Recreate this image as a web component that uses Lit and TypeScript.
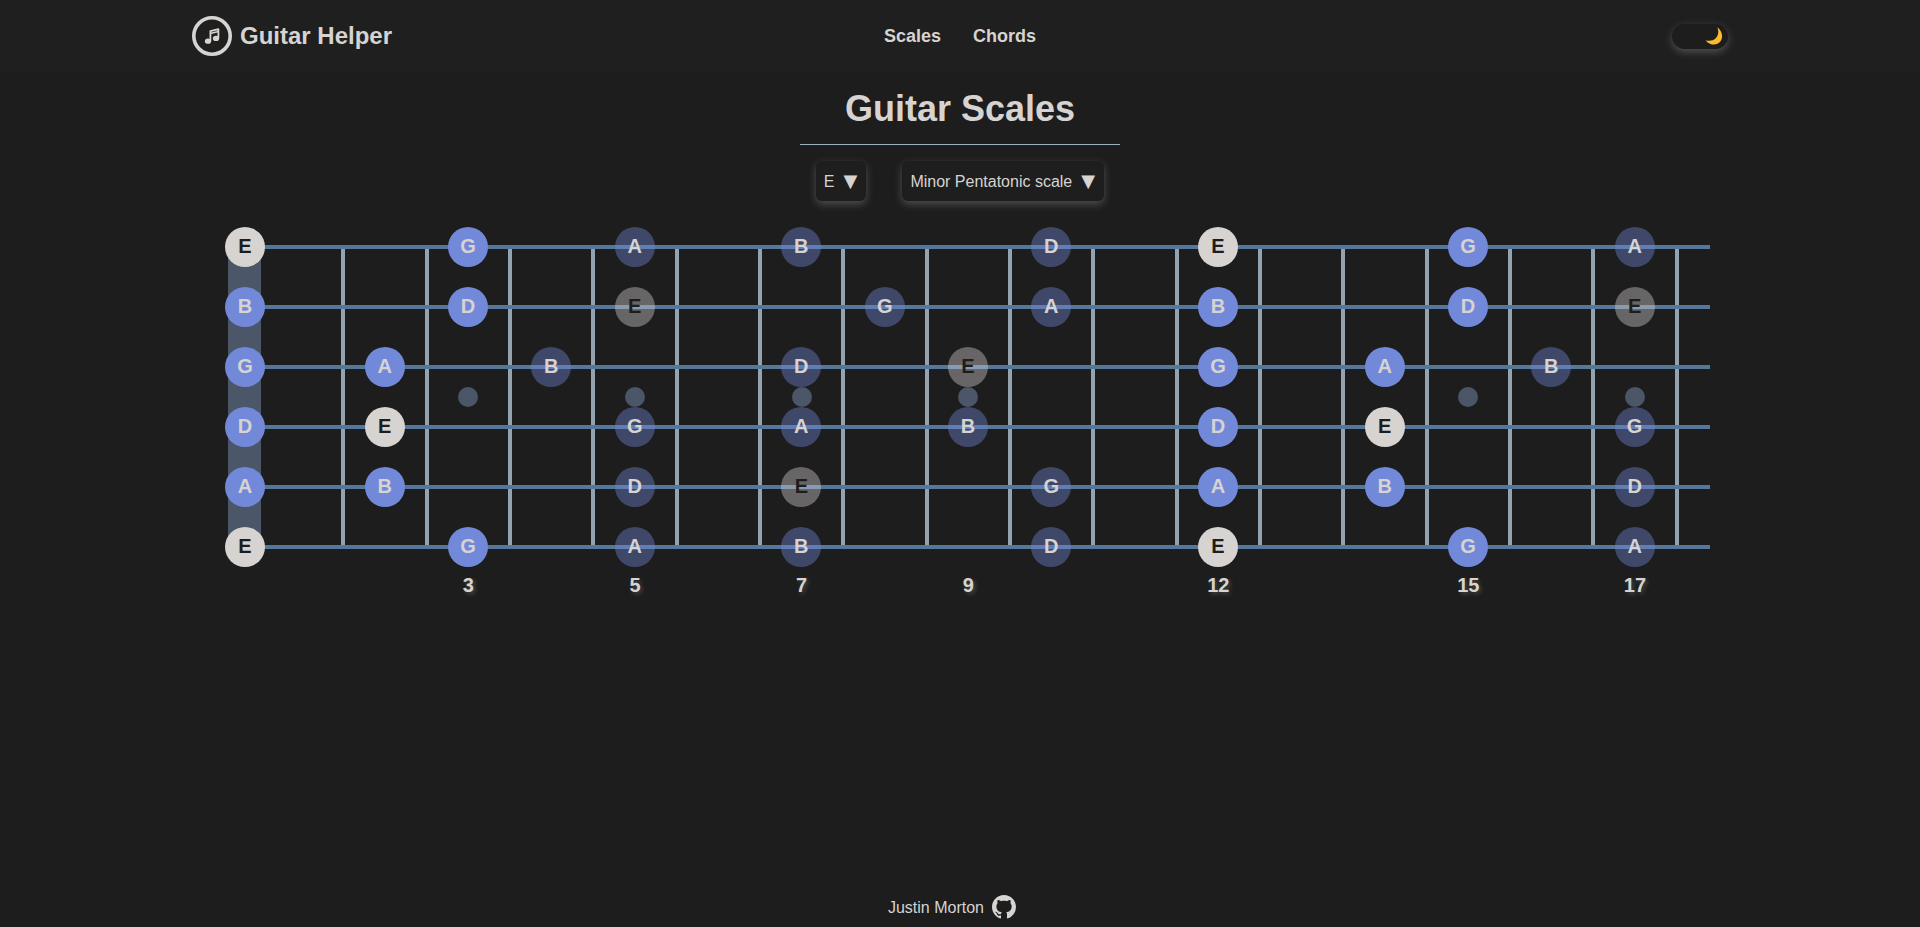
import { LitElement, html, css } from "lit";
import { customElement } from "lit/decorators.js";

type Kind = "b" | "d" | "w" | "x";
// [fret, note, kind] per string; b = scale note, d = dimmed, w = root, x = dimmed root
const STRINGS: [number, string, Kind][][] = [
  [[0,"E","w"],[3,"G","b"],[5,"A","d"],[7,"B","d"],[10,"D","d"],[12,"E","w"],[15,"G","b"],[17,"A","d"]],
  [[0,"B","b"],[3,"D","b"],[5,"E","x"],[8,"G","d"],[10,"A","d"],[12,"B","b"],[15,"D","b"],[17,"E","x"]],
  [[0,"G","b"],[2,"A","b"],[4,"B","d"],[7,"D","d"],[9,"E","x"],[12,"G","b"],[14,"A","b"],[16,"B","d"]],
  [[0,"D","b"],[2,"E","w"],[5,"G","d"],[7,"A","d"],[9,"B","d"],[12,"D","b"],[14,"E","w"],[17,"G","d"]],
  [[0,"A","b"],[2,"B","b"],[5,"D","d"],[7,"E","x"],[10,"G","d"],[12,"A","b"],[14,"B","b"],[17,"D","d"]],
  [[0,"E","w"],[3,"G","b"],[5,"A","d"],[7,"B","d"],[10,"D","d"],[12,"E","w"],[15,"G","b"],[17,"A","d"]],
];
const INLAYS = [3, 5, 7, 9, 15, 17];
const LABELS = [3, 5, 7, 9, 12, 15, 17];
const FRETS = Array.from({ length: 17 }, (_, i) => i + 1);

@customElement("app-root")
export class AppRoot extends LitElement {
  static styles = css`
    :host {
      display: flex;
      flex-direction: column;
      min-height: 927px;
      background: #1d1d1d;
      color: #d6d3d1;
      font-family: "Liberation Sans", Arial, sans-serif;
    }
    header {
      height: 72px;
      box-sizing: border-box;
      padding: 0 192px;
      display: grid;
      grid-template-columns: 1fr auto 1fr;
      align-items: center;
      background: #1f1f1f;
    }
    .brand {
      display: flex;
      align-items: center;
      gap: 8px;
      font-size: 24px;
      font-weight: 700;
    }
    .logo { width: 40px; height: 40px; display: block; }
    nav {
      display: flex;
      gap: 32px;
      font-size: 18px;
      font-weight: 700;
    }
    .toggle-wrap { display: flex; justify-content: flex-end; }
    .toggle {
      width: 56px;
      height: 25px;
      border-radius: 13px;
      background: #1d1d1d;
      box-shadow: 0 3px 8px rgba(214, 211, 209, 0.28);
      display: flex;
      align-items: center;
      justify-content: flex-end;
      padding-right: 5px;
      box-sizing: border-box;
    }
    .moon { width: 18px; height: 18px; display: block; }
    main {
      flex: 1;
      display: flex;
      flex-direction: column;
      align-items: center;
    }
    h1 {
      margin: 16px 0 0;
      font-size: 36px;
      line-height: 41px;
      font-weight: 700;
    }
    .rule {
      width: 320px;
      height: 1px;
      background: #9cb0be;
      margin-top: 15px;
    }
    .pickers {
      display: flex;
      gap: 36px;
      margin-top: 16px;
    }
    .picker {
      height: 40px;
      box-sizing: border-box;
      padding: 1px 8px 0;
      display: flex;
      align-items: center;
      gap: 8px;
      font-size: 16px;
      border-radius: 6px;
      background: #1e1e1e;
      box-shadow: 0 3px 8px rgba(214, 211, 209, 0.28);
    }
    .picker .arrow {
      width: 16px;
      text-align: center;
      font-size: 18px;
      line-height: 18px;
      margin-top: -2px;
      font-family: "DejaVu Sans", sans-serif;
    }
    .board {
      display: grid;
      grid-template-columns: 37px repeat(17, 83.33px) 31.4px;
      grid-template-rows: repeat(6, 60px) auto;
      margin-top: 16px;
      align-self: flex-start;
      margin-left: 225px;
    }
    .nut {
      grid-column: 1;
      grid-row: 1 / 7;
      width: 33px;
      margin: 30px 0 30px 3px;
      background: #4b5669;
    }
    .fret {
      grid-row: 1 / 7;
      justify-self: end;
      width: 4px;
      margin: 30px 0;
      background: #94a3b0;
    }
    .inlay {
      grid-row: 3 / 5;
      align-self: center;
      justify-self: center;
      width: 20px;
      height: 20px;
      margin-right: 4px;
      border-radius: 50%;
      background: #4b5669;
    }
    .string {
      grid-column: 1 / -1;
      align-self: center;
      height: 4px;
      margin-left: 20px;
      background: #54779b;
    }
    .note {
      align-self: center;
      justify-self: center;
      width: 40px;
      height: 40px;
      margin-right: 4.6px;
      border-radius: 50%;
      display: flex;
      align-items: center;
      justify-content: center;
      font-size: 20px;
      font-weight: 700;
      line-height: 1;
      padding-bottom: 2px;
      box-sizing: border-box;
    }
    .note.open { justify-self: start; margin: 0; }
    .note.b { background: #7289da; }
    .note.d { background: rgba(114, 137, 218, 0.4); }
    .note.w { background: #d6d3d1; color: #1d1d1d; }
    .note.x { background: rgba(214, 211, 209, 0.4); color: #1d1d1d; }
    .label {
      grid-row: 7;
      justify-self: center;
      margin: -2px 4px 0 0;
      font-size: 20px;
      font-weight: 700;
      line-height: 20px;
      text-shadow: 2px 2px 4px rgba(214, 211, 209, 0.25);
    }
    footer {
      height: 40px;
      display: flex;
      align-items: center;
      justify-content: center;
      gap: 8px;
      font-size: 16px;
      padding-right: 16px;
    }
    footer span { padding-top: 2px; }
    .gh { width: 24px; height: 24px; display: block; fill: #d6d3d1; }
  `;

  private note(fret: number, str: number, name: string, kind: Kind) {
    return html`<div
      class="note ${kind} ${fret === 0 ? "open" : ""}"
      style="grid-column:${fret + 1};grid-row:${str + 1}"
    >${name}</div>`;
  }

  render() {
    return html`
      <header>
        <div class="brand">
          <svg class="logo" viewBox="0 0 40 40" fill="none" aria-hidden="true">
            <circle cx="20" cy="20" r="18.2" stroke="#d6d3d1" stroke-width="3.6"></circle>
            <path d="M18.400 25V15.200l8-2v9" stroke="#d6d3d1" stroke-width="1.8" stroke-linejoin="round"></path>
            <path d="M18.400 17.400l8-2" stroke="#d6d3d1" stroke-width="1.500"></path>
            <ellipse cx="16" cy="25.200" rx="3.100" ry="2.600" fill="#d6d3d1"></ellipse>
            <ellipse cx="24" cy="22.400" rx="3.100" ry="2.600" fill="#d6d3d1"></ellipse>
          </svg>
          <span>Guitar Helper</span>
        </div>
        <nav><span>Scales</span><span>Chords</span></nav>
        <div class="toggle-wrap">
          <div class="toggle">
            <svg class="moon" viewBox="0 0 18 18" aria-hidden="true">
              <path d="M12.300.2C16.500 3 18.500 9 16 13.500 14 17 9.500 18.500 5.500 17 3.500 16.200 1.800 15 .7 13.200 4 14.300 8 13.800 10.500 11.500 13.500 8.500 14 4 12.300.2z" fill="#fdb92e"></path>
            </svg>
          </div>
        </div>
      </header>
      <main>
        <h1>Guitar Scales</h1>
        <div class="rule"></div>
        <div class="pickers">
          <div class="picker"><span>E</span><span class="arrow">▼</span></div>
          <div class="picker"><span>Minor Pentatonic scale</span><span class="arrow">▼</span></div>
        </div>
        <div class="board">
          <div class="nut"></div>
          ${FRETS.map((f) => html`<div class="fret" style="grid-column:${f + 1}"></div>`)}
          ${INLAYS.map((f) => html`<div class="inlay" style="grid-column:${f + 1}"></div>`)}
          ${STRINGS.map((_, s) => html`<div class="string" style="grid-row:${s + 1}"></div>`)}
          ${STRINGS.map((notes, s) => notes.map(([f, n, k]) => this.note(f, s, n, k)))}
          ${LABELS.map((f) => html`<div class="label" style="grid-column:${f + 1}">${f}</div>`)}
        </div>
      </main>
      <footer>
        <span>Justin Morton</span>
        <svg class="gh" viewBox="0 0 16 16" aria-hidden="true">
          <path d="M8 0C3.58 0 0 3.58 0 8c0 3.54 2.29 6.53 5.47 7.59.4.07.55-.17.55-.38 0-.19-.01-.82-.01-1.49-2.01.37-2.53-.49-2.69-.94-.09-.23-.48-.94-.82-1.13-.28-.15-.68-.52-.01-.53.63-.01 1.08.58 1.23.82.72 1.21 1.87.87 2.33.66.07-.52.28-.87.51-1.07-1.78-.2-3.64-.89-3.64-3.95 0-.87.31-1.59.82-2.15-.08-.2-.36-1.02.08-2.12 0 0 .67-.21 2.2.82.64-.18 1.32-.27 2-.27.68 0 1.36.09 2 .27 1.53-1.04 2.2-.82 2.2-.82.44 1.1.16 1.92.08 2.12.51.56.82 1.27.82 2.15 0 3.07-1.87 3.75-3.65 3.95.29.25.54.73.54 1.48 0 1.07-.01 1.93-.01 2.2 0 .21.15.46.55.38A8.013 8.013 0 0016 8c0-4.42-3.58-8-8-8z"></path>
        </svg>
      </footer>
    `;
  }
}
